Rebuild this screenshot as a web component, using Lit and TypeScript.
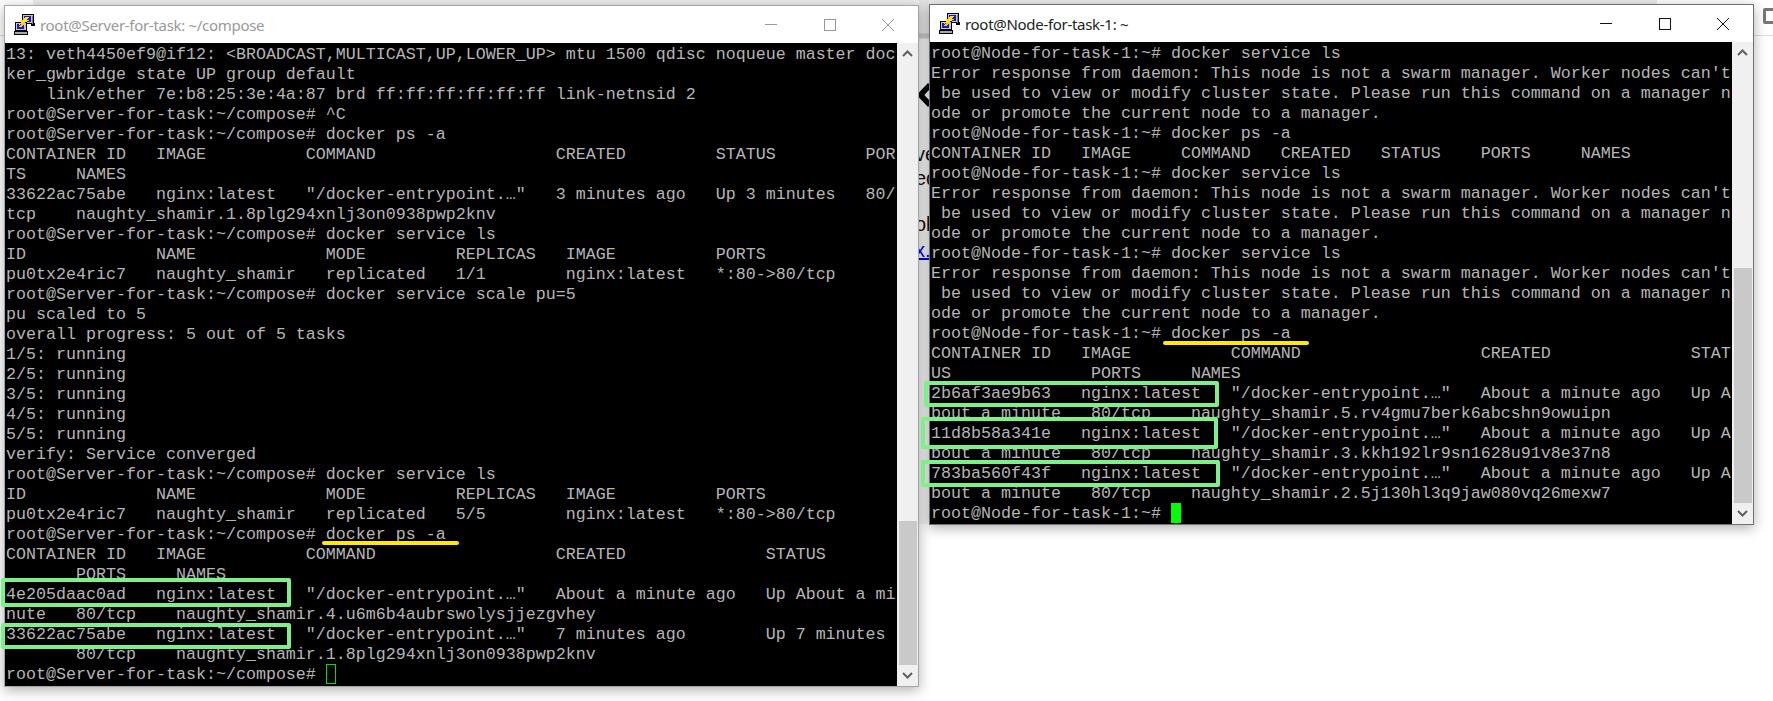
import { LitElement, html, css, svg } from "lit";
import { customElement } from "lit/decorators.js";

const SP = "root@Server-for-task:~/compose#";
const NP = "root@Node-for-task-1:~#";
const ERR = [
  "Error response from daemon: This node is not a swarm manager. Worker nodes can't",
  " be used to view or modify cluster state. Please run this command on a manager n",
  "ode or promote the current node to a manager.",
];

const leftLines = [
  "13: veth4450ef9@if12: <BROADCAST,MULTICAST,UP,LOWER_UP> mtu 1500 qdisc noqueue master doc",
  "ker_gwbridge state UP group default",
  "    link/ether 7e:b8:25:3e:4a:87 brd ff:ff:ff:ff:ff:ff link-netnsid 2",
  `${SP} ^C`,
  `${SP} docker ps -a`,
  "CONTAINER ID   IMAGE          COMMAND                  CREATED         STATUS         POR",
  "TS     NAMES",
  '33622ac75abe   nginx:latest   "/docker-entrypoint.…"   3 minutes ago   Up 3 minutes   80/',
  "tcp    naughty_shamir.1.8plg294xnlj3on0938pwp2knv",
  `${SP} docker service ls`,
  "ID             NAME             MODE         REPLICAS   IMAGE          PORTS",
  "pu0tx2e4ric7   naughty_shamir   replicated   1/1        nginx:latest   *:80->80/tcp",
  `${SP} docker service scale pu=5`,
  "pu scaled to 5",
  "overall progress: 5 out of 5 tasks",
  "1/5: running",
  "2/5: running",
  "3/5: running",
  "4/5: running",
  "5/5: running",
  "verify: Service converged",
  `${SP} docker service ls`,
  "ID             NAME             MODE         REPLICAS   IMAGE          PORTS",
  "pu0tx2e4ric7   naughty_shamir   replicated   5/5        nginx:latest   *:80->80/tcp",
  `${SP} docker ps -a`,
  "CONTAINER ID   IMAGE          COMMAND                  CREATED              STATUS",
  "       PORTS     NAMES",
  '4e205daac0ad   nginx:latest   "/docker-entrypoint.…"   About a minute ago   Up About a mi',
  "nute   80/tcp    naughty_shamir.4.u6m6b4aubrswolysjjezgvhey",
  '33622ac75abe   nginx:latest   "/docker-entrypoint.…"   7 minutes ago        Up 7 minutes',
  "       80/tcp    naughty_shamir.1.8plg294xnlj3on0938pwp2knv",
  `${SP} `,
];

const rightLines = [
  `${NP} docker service ls`,
  ...ERR,
  `${NP} docker ps -a`,
  "CONTAINER ID   IMAGE     COMMAND   CREATED   STATUS    PORTS     NAMES",
  `${NP} docker service ls`,
  ...ERR,
  `${NP} docker service ls`,
  ...ERR,
  `${NP} docker ps -a`,
  "CONTAINER ID   IMAGE          COMMAND                  CREATED              STAT",
  "US              PORTS     NAMES",
  '2b6af3ae9b63   nginx:latest   "/docker-entrypoint.…"   About a minute ago   Up A',
  "bout a minute   80/tcp    naughty_shamir.5.rv4gmu7berk6abcshn9owuipn",
  '11d8b58a341e   nginx:latest   "/docker-entrypoint.…"   About a minute ago   Up A',
  "bout a minute   80/tcp    naughty_shamir.3.kkh192lr9sn1628u91v8e37n8",
  '783ba560f43f   nginx:latest   "/docker-entrypoint.…"   About a minute ago   Up A',
  "bout a minute   80/tcp    naughty_shamir.2.5j130hl3q9jaw080vq26mexw7",
  `${NP} `,
];

const puttyIcon = html`<svg class="icon" viewBox="0 0 21 21" width="21" height="21" shape-rendering="crispEdges">
  ${svg`
    <rect x="8" y="0" width="12" height="10" fill="#000"/>
    <rect x="9" y="1" width="10" height="8" fill="#c6c6c6"/>
    <rect x="10" y="2" width="7" height="6" fill="#1a1ac8"/>
    <rect x="12" y="3" width="2" height="2" fill="#9ab4ff"/>
    <rect x="17" y="9" width="4" height="3" fill="#000"/>
    <rect x="18" y="2" width="1" height="8" fill="#808080"/>
    <rect x="1" y="8" width="12" height="9" fill="#000"/>
    <rect x="2" y="9" width="10" height="7" fill="#c6c6c6"/>
    <rect x="3" y="10" width="7" height="5" fill="#1a1ac8"/>
    <rect x="0" y="17" width="14" height="4" fill="#000"/>
    <rect x="1" y="18" width="12" height="2" fill="#a8a8a8"/>
    <polygon points="15,3 13,6 16,6 8,10 4,11 7,8 5,8 10,5 9,5 12,3" fill="#ffe21a"/>
    <polygon points="4,13 9,9 11,10 7,13" fill="#f7d000"/>
  `}
</svg>`;

const chevron = (up: boolean) =>
  html`<svg class="chev" viewBox="0 0 11 7" width="11" height="7">
    ${svg`<path d=${up ? "M1 6 L5.5 1.5 L10 6" : "M1 1 L5.5 5.5 L10 1"} fill="none" stroke="#606060" stroke-width="2"/>`}
  </svg>`;

@customElement("app-root")
export class AppRoot extends LitElement {
  static styles = css`
    :host {
      display: block;
      position: relative;
      width: 1773px;
      height: 701px;
      overflow: hidden;
      background: #fff;
    }
    .topbar {
      display: flex;
      height: 35px;
      border-bottom: 1px solid #dcdcdc;
      background: #fff;
    }
    .tabs {
      margin-left: 33px;
      width: 1624px;
      height: 5px;
      background: #ececec;
    }
    .tool {
      position: absolute;
      left: 1763px;
      top: 8px;
      width: 20px;
      height: 10px;
      border: 3px solid #777;
      border-radius: 2px;
    }
    .gutter {
      position: absolute;
      left: 919px;
      top: 0;
      width: 10px;
      height: 524px;
      overflow: hidden;
      background: linear-gradient(#e4e4e4 0, #e4e4e4 33px, #c4c4c4 34px, #c8c8c8 38px, #f3f3f3 39px);
    }
    .arrow {
      position: absolute;
      left: 0;
      top: 83px;
    }
    .back {
      position: absolute;
      left: 0;
      display: block;
      width: 10px;
      overflow: hidden;
      text-indent: -4px;
      font-family: "Liberation Sans", sans-serif;
      font-size: 20px;
      line-height: 24px;
      color: #111;
      white-space: nowrap;
    }
    .b1 { top: 142px; }
    .b2 { top: 166px; }
    .b3 { top: 212px; }
    .b4 {
      top: 238px;
      color: #0000e0;
      text-decoration: underline;
    }
    .win {
      position: absolute;
      display: flex;
      flex-direction: column;
      box-sizing: border-box;
      background: #fff;
      border: 1px solid #8c8c8c;
      box-shadow: 0 3px 12px rgba(0, 0, 0, 0.32);
    }
    .left {
      left: 4px;
      top: 5px;
      width: 915px;
      height: 682px;
      border-color: #a6a6a6;
    }
    .right {
      left: 929px;
      top: 4px;
      width: 825px;
      height: 521px;
      border-color: #707070;
    }
    .title {
      flex: none;
      display: flex;
      align-items: center;
      height: 37px;
      box-sizing: border-box;
      padding-left: 9px;
      font-family: "Noto Sans", sans-serif;
      font-size: 15px;
      color: #222;
    }
    .left .title { color: #999; }
    .icon { flex: none; margin-right: 5px; }
    .ttext { flex: 1; white-space: nowrap; letter-spacing: -0.3px; }
    .ctrl {
      flex: none;
      display: flex;
      align-items: center;
      margin-right: 24px;
      gap: 46.5px;
    }
    .ctrl svg { display: block; }
    .left .ctrl svg { stroke: #999; }
    .right .ctrl svg { stroke: #111; }
    .body {
      flex: 1;
      display: flex;
      min-height: 0;
    }
    pre {
      flex: 1;
      margin: 0;
      padding: 2px 0 0 1px;
      background: #000;
      color: #b6b6b6;
      font-family: "Liberation Mono", "Courier New", monospace;
      font-size: 16.6667px;
      line-height: 20px;
      overflow: hidden;
      white-space: pre;
      min-width: 0;
    }
    .sb {
      flex: none;
      display: flex;
      flex-direction: column;
      width: 21px;
      background: #f0f0f0;
    }
    .btn {
      flex: none;
      display: flex;
      align-items: center;
      justify-content: center;
      height: 21px;
    }
    .left .track { flex: 456; }
    .right .track { flex: 205; }
    .thumb { margin: 0 1px 0 2px; background: #c9c9c9; }
    .left .thumb { flex: 144; }
    .right .thumb { flex: 235; }
    .mark {
      position: absolute;
      box-sizing: border-box;
      border: 4px solid #7df08a;
      border-radius: 2px;
    }
    .m1 { left: 1px; top: 578px; width: 290px; height: 29px; }
    .m2 { left: 1px; top: 623px; width: 290px; height: 26px; }
    .m3 { left: 924px; top: 381px; width: 295px; height: 26px; }
    .m4 { left: 921px; top: 417px; width: 297px; height: 32px; }
    .m5 { left: 921px; top: 460px; width: 299px; height: 27px; }
    .line {
      position: absolute;
      height: 4px;
      background: #ffea00;
      border-radius: 2px;
    }
    .l1 { left: 322px; top: 541px; width: 137px; }
    .l2 { left: 1163px; top: 341px; width: 146px; }
    .cursor {
      position: absolute;
      box-sizing: border-box;
      width: 10px;
      height: 20px;
      border: 1px solid #00e000;
    }
    .c1 { left: 326px; top: 664px; }
    .c2 { left: 1171px; top: 503px; background: #00ff00; border-color: #00ff00; }
  `;

  private win(cls: string, title: string, lines: string[]) {
    return html`<section class="win ${cls}">
      <header class="title">
        ${puttyIcon}
        <span class="ttext">${title}</span>
        <div class="ctrl">
          <svg width="12" height="12" viewBox="0 0 12 12" fill="none" stroke-width="1"><path d="M0 5.5H12" /></svg>
          <svg width="12" height="12" viewBox="0 0 12 12" fill="none" stroke-width="1"><rect x="0.5" y="0.5" width="11" height="11" /></svg>
          <svg width="12" height="12" viewBox="0 0 12 12" fill="none" stroke-width="1"><path d="M0 0L12 12M12 0L0 12" /></svg>
        </div>
      </header>
      <div class="body">
        <pre>${lines.join("\n")}</pre>
        <div class="sb">
          <div class="btn">${chevron(true)}</div>
          <div class="track"></div>
          <div class="thumb"></div>
          <div class="btn">${chevron(false)}</div>
        </div>
      </div>
    </section>`;
  }

  render() {
    return html`
      <div class="topbar"><div class="tabs"></div></div>
      <div class="tool"></div>
      <div class="gutter">
        <svg class="arrow" width="10" height="24" viewBox="0 0 10 24">
          ${svg`<path d="M11 2 L1.5 12 L11 22" fill="none" stroke="#000" stroke-width="5.5"/>`}
        </svg>
        <span class="back b1">ve</span>
        <span class="back b2">ed</span>
        <span class="back b3">ol</span>
        <span class="back b4">x.</span>
      </div>
      ${this.win("left", "root@Server-for-task: ~/compose", leftLines)}
      ${this.win("right", "root@Node-for-task-1: ~", rightLines)}
      <div class="mark m1"></div>
      <div class="mark m2"></div>
      <div class="mark m3"></div>
      <div class="mark m4"></div>
      <div class="mark m5"></div>
      <div class="line l1"></div>
      <div class="line l2"></div>
      <div class="cursor c1"></div>
      <div class="cursor c2"></div>
    `;
  }
}
